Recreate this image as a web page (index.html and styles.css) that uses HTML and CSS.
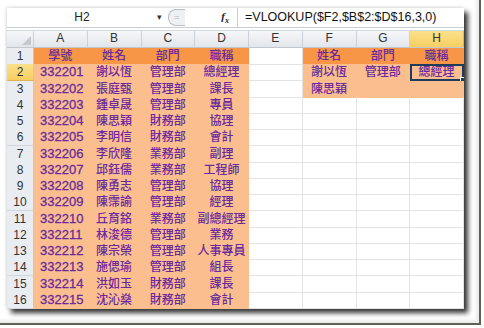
FILE: index.html
```html
<!DOCTYPE html>
<html lang="zh-Hant">
<head>
    <meta charset="UTF-8">
    <title>VLOOKUP</title>
    <link rel="stylesheet" href="styles.css">
</head>
<body>
<div class="frame">
    <div class="sheet">
        <div class="formula-bar">
            <div class="name-box">H2</div>
            <div class="arrow">&#9662;</div>
            <div class="fx-area"><span class="pill">=</span><span class="fx">f<sub>x</sub></span></div>
            <div class="formula">=VLOOKUP($F2,$B$2:$D$16,3,0)</div>
        </div>

        <div class="row head">
            <div class="corner"><span class="tri"></span></div>
            <div>A</div><div>B</div><div>C</div><div>D</div><div>E</div><div>F</div><div>G</div><div class="sel">H</div>
        </div>

        <div class="row">
            <div class="rh">1</div>
            <div class="c top">學號</div><div class="c top">姓名</div><div class="c top">部門</div><div class="c top">職稱</div>
            <div class="c"></div>
            <div class="c top">姓名</div><div class="c top">部門</div><div class="c top">職稱</div>
        </div>
        <div class="row">
            <div class="rh sel">2</div>
            <div class="c num">332201</div><div class="c lt">謝以恆</div><div class="c lt">管理部</div><div class="c lt">總經理</div>
            <div class="c"></div>
            <div class="c lt">謝以恆</div><div class="c lt">管理部</div><div class="c lt active">總經理<span class="handle"></span></div>
        </div>
        <div class="row">
            <div class="rh">3</div>
            <div class="c num">332202</div><div class="c lt">張庭甄</div><div class="c lt">管理部</div><div class="c lt">課長</div>
            <div class="c"></div>
            <div class="c lt">陳思穎</div><div class="c lt"></div><div class="c lt"></div>
        </div>
        <div class="row">
            <div class="rh">4</div>
            <div class="c num">332203</div><div class="c lt">鍾卓晟</div><div class="c lt">管理部</div><div class="c lt">專員</div>
            <div class="c"></div><div class="c"></div><div class="c"></div><div class="c"></div>
        </div>
        <div class="row">
            <div class="rh">5</div>
            <div class="c num">332204</div><div class="c lt">陳思穎</div><div class="c lt">財務部</div><div class="c lt">協理</div>
            <div class="c"></div><div class="c"></div><div class="c"></div><div class="c"></div>
        </div>
        <div class="row">
            <div class="rh">6</div>
            <div class="c num">332205</div><div class="c lt">李明信</div><div class="c lt">財務部</div><div class="c lt">會計</div>
            <div class="c"></div><div class="c"></div><div class="c"></div><div class="c"></div>
        </div>
        <div class="row">
            <div class="rh">7</div>
            <div class="c num">332206</div><div class="c lt">李欣隆</div><div class="c lt">業務部</div><div class="c lt">副理</div>
            <div class="c"></div><div class="c"></div><div class="c"></div><div class="c"></div>
        </div>
        <div class="row">
            <div class="rh">8</div>
            <div class="c num">332207</div><div class="c lt">邱鈺儒</div><div class="c lt">業務部</div><div class="c lt">工程師</div>
            <div class="c"></div><div class="c"></div><div class="c"></div><div class="c"></div>
        </div>
        <div class="row">
            <div class="rh">9</div>
            <div class="c num">332208</div><div class="c lt">陳勇志</div><div class="c lt">管理部</div><div class="c lt">協理</div>
            <div class="c"></div><div class="c"></div><div class="c"></div><div class="c"></div>
        </div>
        <div class="row">
            <div class="rh">10</div>
            <div class="c num">332209</div><div class="c lt">陳霈諭</div><div class="c lt">管理部</div><div class="c lt">經理</div>
            <div class="c"></div><div class="c"></div><div class="c"></div><div class="c"></div>
        </div>
        <div class="row">
            <div class="rh">11</div>
            <div class="c num">332210</div><div class="c lt">丘育銘</div><div class="c lt">業務部</div><div class="c lt">副總經理</div>
            <div class="c"></div><div class="c"></div><div class="c"></div><div class="c"></div>
        </div>
        <div class="row">
            <div class="rh">12</div>
            <div class="c num">332211</div><div class="c lt">林浚德</div><div class="c lt">管理部</div><div class="c lt">業務</div>
            <div class="c"></div><div class="c"></div><div class="c"></div><div class="c"></div>
        </div>
        <div class="row">
            <div class="rh">13</div>
            <div class="c num">332212</div><div class="c lt">陳宗榮</div><div class="c lt">管理部</div><div class="c lt">人事專員</div>
            <div class="c"></div><div class="c"></div><div class="c"></div><div class="c"></div>
        </div>
        <div class="row">
            <div class="rh">14</div>
            <div class="c num">332213</div><div class="c lt">施偲瑜</div><div class="c lt">管理部</div><div class="c lt">組長</div>
            <div class="c"></div><div class="c"></div><div class="c"></div><div class="c"></div>
        </div>
        <div class="row">
            <div class="rh">15</div>
            <div class="c num">332214</div><div class="c lt">洪如玉</div><div class="c lt">財務部</div><div class="c lt">課長</div>
            <div class="c"></div><div class="c"></div><div class="c"></div><div class="c"></div>
        </div>
        <div class="row">
            <div class="rh">16</div>
            <div class="c num">332215</div><div class="c lt">沈沁燊</div><div class="c lt">財務部</div><div class="c lt">會計</div>
            <div class="c"></div><div class="c"></div><div class="c"></div><div class="c"></div>
        </div>
    </div>
</div>
</body>
</html>
```

FILE: styles.css
```css
body {
    margin: 0;
    background: #fff;
    font-family: "Liberation Sans", "Noto Sans CJK TC", sans-serif;
}
.frame {
    width: 481px;
    height: 325px;
    border-right: 2px solid #5f6253;
    border-bottom: 2px solid #5f6253;
    padding: 8px 0 0 7px;
    box-sizing: border-box;
    box-shadow: inset -3px -3px 3px rgba(0, 0, 0, 0.08);
}
.sheet {
    width: 457px;
    height: 301px;
    background: #fff;
    box-shadow: 4px 4px 5px rgba(0, 0, 0, 0.8), -1px -1px 3px rgba(0, 0, 0, 0.12);
    overflow: hidden;
}
.formula-bar {
    display: flex;
    height: 19px;
    border-bottom: 1px solid #c9ced6;
    font-size: 12px;
    color: #222;
}
.name-box {
    width: 150px;
    text-align: center;
    line-height: 19px;
}
.arrow {
    width: 10px;
    font-size: 9px;
    line-height: 19px;
    color: #333;
}
.fx-area {
    display: flex;
    align-items: center;
    width: 70px;
    border-right: 1px solid #c9ced6;
    background: #fff;
}
.pill {
    width: 16px;
    height: 15px;
    margin-left: 1px;
    border: 1px solid #b8bec6;
    border-right: none;
    border-radius: 8px 0 0 8px;
    background: #eef0f3;
    color: #b0b5bb;
    font-size: 9px;
    line-height: 15px;
    text-align: center;
}
.fx {
    margin-left: auto;
    margin-right: 8px;
    font-family: "Liberation Serif", serif;
    font-style: italic;
    font-weight: bold;
    font-size: 11px;
}
.fx sub {
    font-size: 8px;
}
.formula {
    padding-left: 7px;
    line-height: 19px;
    font-size: 12.5px;
    color: #111;
}
.row {
    display: grid;
    grid-template-columns: 27px repeat(8, 53.75px);
    height: 16.25px;
}
.head {
    height: 16px;
    margin-top: 2px;
    background: linear-gradient(#f6f7f9, #e2e6eb);
    border-top: 1px solid #d5dae0;
    border-bottom: 1px solid #c2c8d0;
    font-size: 12px;
    color: #333;
}
.head div {
    text-align: center;
    line-height: 15px;
    border-right: 1px solid #cbd1d8;
}
.head .sel {
    background: linear-gradient(#fbe08a, #f6cf62);
    border-right: 1px solid #e0b450;
}
.corner {
    position: relative;
}
.tri {
    position: absolute;
    right: 2px;
    bottom: 2px;
    border-left: 9px solid transparent;
    border-bottom: 9px solid #c4c9cf;
}
.rh {
    background: #e9ecf0;
    border-right: 1px solid #c2c8d0;
    border-bottom: 1px solid #d2d7de;
    font-size: 12px;
    color: #333;
    text-align: center;
    line-height: 16px;
}
.rh.sel {
    background: linear-gradient(#fbe08a, #f6cf62);
    border-bottom-color: #e0b450;
}
.c {
    position: relative;
    border-right: 1px solid #e3e3e3;
    border-bottom: 1px solid #e3e3e3;
    font-size: 12px;
    font-weight: 500;
    line-height: 16px;
    color: #6a2a9e;
    text-align: center;
    white-space: nowrap;
}
.top {
    background: #f79646;
    border-color: #f79646;
}
.lt, .num {
    background: #fbbf8f;
    border-color: #fbbf8f;
}
.num {
    text-align: left;
    padding-left: 6px;
    font-size: 13px;
    -webkit-text-stroke: 0.3px #6a2a9e;
}
.active {
    outline: 2px solid #1f3b5c;
    outline-offset: -2px;
}
.handle {
    position: absolute;
    right: -3px;
    bottom: -3px;
    width: 4px;
    height: 4px;
    background: #1f3b5c;
    border: 1px solid #fff;
}
```
